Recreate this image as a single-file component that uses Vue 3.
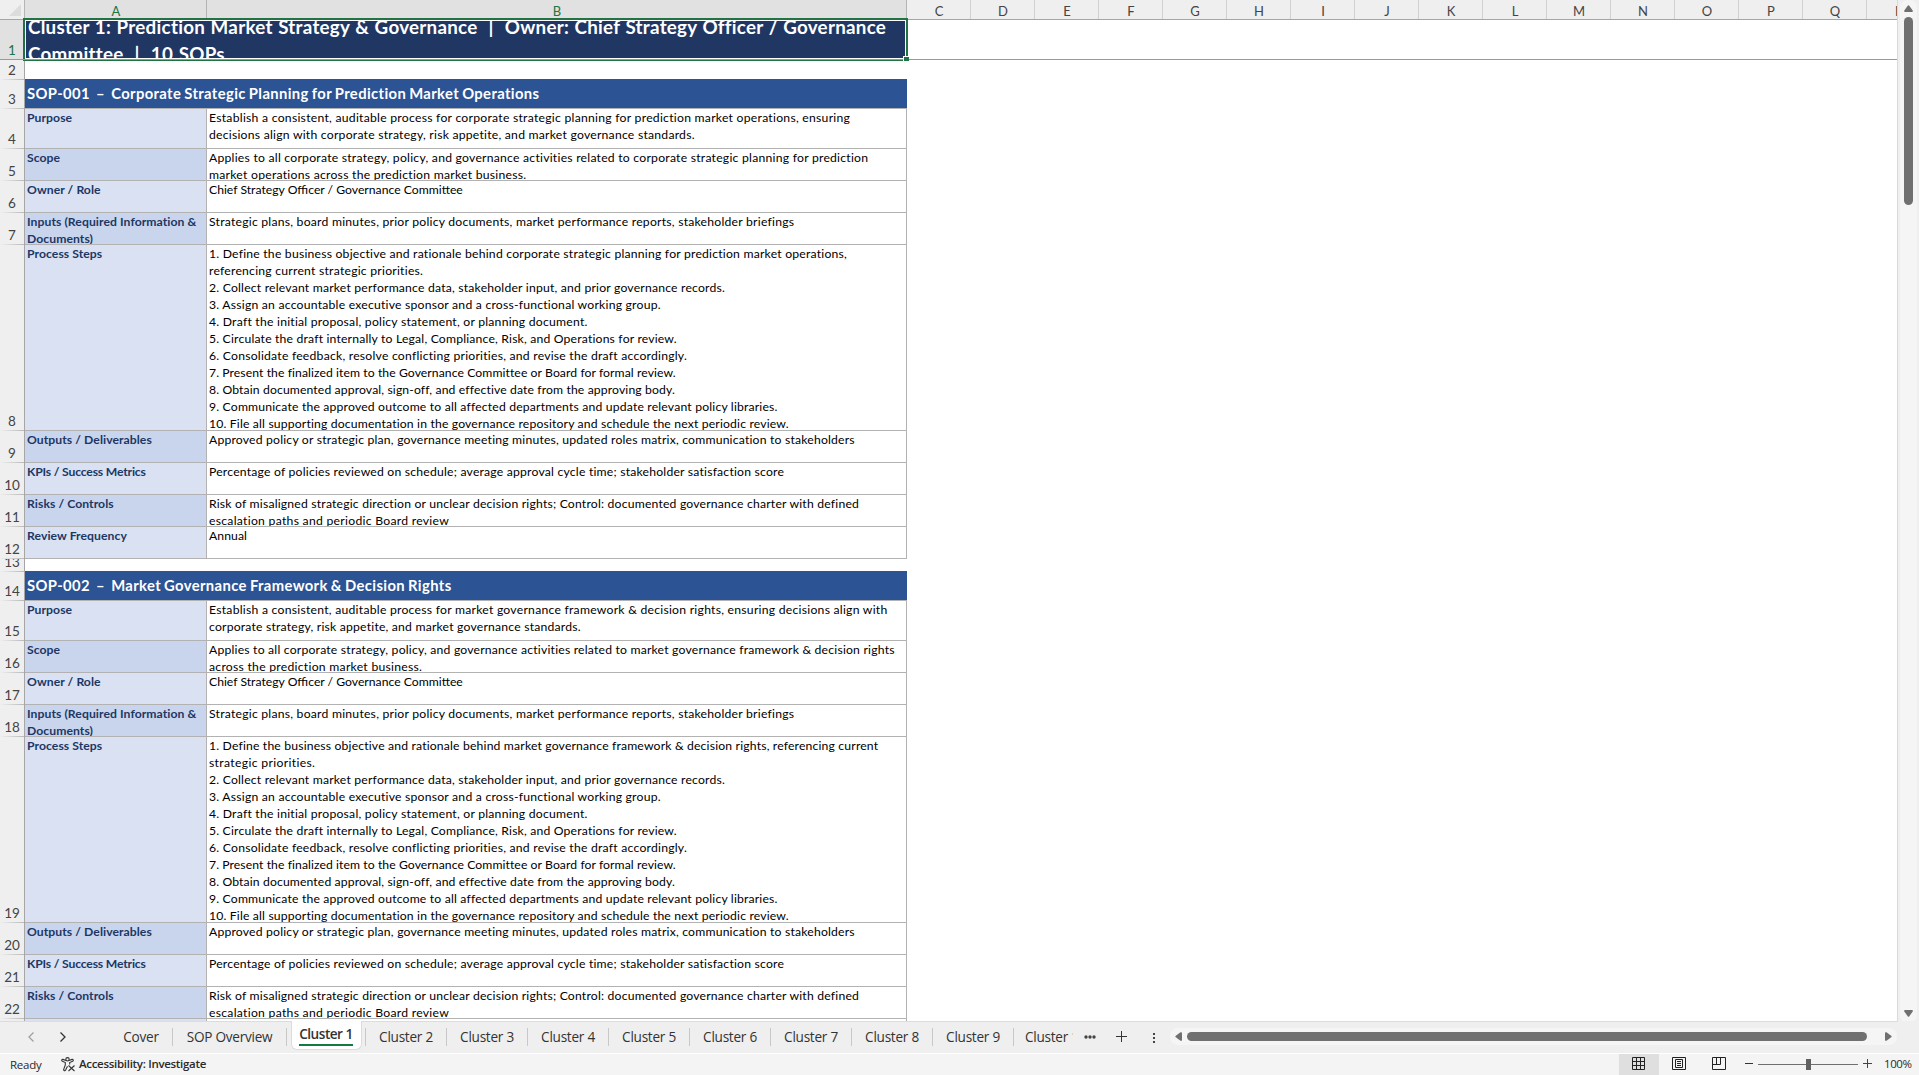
<template>
  <div class="excel">
    <div class="workspace">
      <div class="sheet">
        <!-- Column headers -->
        <div class="col-headers">
          <div class="corner"><svg width="12" height="12" viewBox="0 0 12 12"><path d="M12 0V12H0z" fill="#dcdcdc" /></svg></div>
          <div class="col-head col-a selected">A</div>
          <div class="col-head col-b selected">B</div>
          <div v-for="letter in otherColumns" :key="letter" class="col-head">{{ letter }}</div>
        </div>

        <!-- Rows -->
        <div class="rows">
          <div v-for="row in rows" :key="row.num" :class="['row', row.type]" :style="{ height: row.height + 'px' }">
            <div class="row-head"><span>{{ row.num }}</span></div>
            <div v-if="row.type === 'title'" class="title-cell">{{ row.text }}</div>
            <div v-else-if="row.type === 'section'" class="section-cell">{{ row.text }}</div>
            <template v-else-if="row.type === 'field'">
              <div :class="['label-cell', { alt: row.alt, tight: row.label.startsWith('KPIs') }]">{{ row.label }}</div>
              <div class="value-cell">
                <div v-for="([text, extra], idx) in row.lines" :key="idx" :style="{ letterSpacing: tracking(text, extra) }">{{ text }}</div>
              </div>
            </template>
          </div>
        </div>

        <div class="freeze-line"></div>
        <div class="selection"></div>
        <div class="selection-base"></div>
        <div class="fill-handle"></div>
      </div>

      <!-- Vertical scrollbar -->
      <div class="v-scroll">
        <svg class="v-arrow" width="9" height="7" viewBox="0 0 9 7"><path d="M3.7.8Q4.5-.2 5.3.8L8.7 5.5Q9.2 7 8 7H1Q-.2 7 .3 5.5z" fill="#707070" /></svg>
        <div class="v-thumb"></div>
        <svg class="v-arrow down" width="9" height="7" viewBox="0 0 9 7"><path d="M3.7 6.2Q4.5 7.2 5.3 6.2L8.7 1.5Q9.2 0 8 0H1Q-.2 0 .3 1.5z" fill="#707070" /></svg>
      </div>
    </div>

    <!-- Sheet tabs -->
    <div class="tab-bar">
      <div class="tab-nav">
        <svg width="8" height="12" viewBox="0 0 8 12"><path d="M6.5 1.5L2 6l4.5 4.5" fill="none" stroke="#a0a0a0" stroke-width="1.3" /></svg>
        <svg width="8" height="12" viewBox="0 0 8 12"><path d="M1.5 1.5L6 6l-4.5 4.5" fill="none" stroke="#333" stroke-width="1.3" /></svg>
      </div>
      <div v-for="tab in tabs" :key="tab.name" :class="['tab', tab.cls, { active: tab.name === activeTab }]" @click="activeTab = tab.name">
        <span>{{ tab.name }}</span>
      </div>
      <div class="tab cut"><span>Cluster 10</span></div>
      <svg class="more" width="12" height="4" viewBox="0 0 12 4"><g fill="#444"><circle cx="2" cy="2" r="1.7" /><circle cx="6" cy="2" r="1.7" /><circle cx="10" cy="2" r="1.7" /></g></svg>
      <svg class="add" width="11" height="11" viewBox="0 0 11 11"><path d="M5.5 0V11M0 5.5H11" stroke="#333" stroke-width="1" /></svg>
      <svg class="grip" width="2" height="10" viewBox="0 0 2 10"><path d="M0 0h2v2H0zM0 4h2v2H0zM0 8h2v2H0z" fill="#444" /></svg>
      <div class="h-scroll">
        <svg width="7" height="9" viewBox="0 0 7 9"><path d="M.8 3.7Q-.2 4.5 .8 5.3L5.5 8.7Q7 9.2 7 8V1Q7-.2 5.5.3z" fill="#707070" /></svg>
        <div class="h-thumb"></div>
        <svg width="7" height="9" viewBox="0 0 7 9"><path d="M6.2 3.7Q7.2 4.5 6.2 5.3L1.5 8.7Q0 9.2 0 8V1Q0-.2 1.5.3z" fill="#707070" /></svg>
      </div>
    </div>

    <!-- Status bar -->
    <div class="status-bar">
      <span class="ready">Ready</span>
      <svg class="access-icon" width="15" height="15" viewBox="0 0 15 15" fill="none" stroke="#333" stroke-width="1.1">
        <circle cx="6.5" cy="2.3" r="1.7" />
        <path d="M4.9 3.5L2 2.4C.6 2.2.3 3.8 1.4 4.3L4.3 5.5V8L2.7 12.3C2.5 13.7 4 14.2 4.6 13.1L6.5 9.2M8.1 3.5L11 2.4C12.4 2.2 12.7 3.8 11.6 4.3L8.7 5.5V7.5" />
        <path d="M7.5 8.5L13.5 14M13.5 8.5L7.5 14" />
      </svg>
      <span class="access">Accessibility: Investigate</span>
      <div class="views">
        <div class="view on">
          <svg width="14" height="14" viewBox="0 0 14 14" fill="none" stroke="#222"><path d="M.5.5h12v12H.5zM4.5.5v12M8.5.5v12M.5 4.5h12M.5 8.5h12" /></svg>
        </div>
        <div class="view">
          <svg width="14" height="14" viewBox="0 0 14 14" fill="none" stroke="#222"><path d="M.5.5h13v12H.5zM3.5 2.5h7v8h-7zM5 4.5h4M5 6.5h4M5 8.5h4" /></svg>
        </div>
        <div class="view">
          <svg width="14" height="14" viewBox="0 0 14 14" fill="none" stroke="#222"><path d="M.5.5h13v12H.5zM.5 7.5h8v-7M4.5.5v7" /></svg>
        </div>
      </div>
      <div class="zoom">
        <span class="minus"></span>
        <div class="slider"><div class="knob"></div></div>
        <svg width="9" height="9" viewBox="0 0 9 9"><path d="M4.5 0V9M0 4.5H9" stroke="#444" /></svg>
        <span class="percent">100%</span>
      </div>
    </div>
  </div>
</template>

<script setup>
import { ref } from 'vue'

const otherColumns = 'CDEFGHIJKLMNOPQR'.split('')

const activeTab = ref('Cluster 1')
const tabs = [
  { name: 'Cover', cls: 'cover' },
  { name: 'SOP Overview', cls: 'overview' },
  ...[1, 2, 3, 4, 5, 6, 7, 8, 9].map(n => ({ name: 'Cluster ' + n, cls: n === 1 ? 'first' : '' })),
]

// each line is [text, extra width in px spread over its letters]
const commonSteps = [
  ['2. Collect relevant market performance data, stakeholder input, and prior governance records.', 18.5],
  ['3. Assign an accountable executive sponsor and a cross-functional working group.', 17.5],
  ['4. Draft the initial proposal, policy statement, or planning document.', 16],
  ['5. Circulate the draft internally to Legal, Compliance, Risk, and Operations for review.', 16],
  ['6. Consolidate feedback, resolve conflicting priorities, and revise the draft accordingly.', 20.5],
  ['7. Present the finalized item to the Governance Committee or Board for formal review.', 6.5],
  ['8. Obtain documented approval, sign-off, and effective date from the approving body.', 10.5],
  ['9. Communicate the approved outcome to all affected departments and update relevant policy libraries.', 18],
  ['10. File all supporting documentation in the governance repository and schedule the next periodic review.', 17],
]

const sops = [
  {
    title: 'SOP-001  –  Corporate Strategic Planning for Prediction Market Operations',
    purpose: [
      ['Establish a consistent, auditable process for corporate strategic planning for prediction market operations, ensuring', 30],
      ['decisions align with corporate strategy, risk appetite, and market governance standards.', 20.5],
    ],
    scope: [
      ['Applies to all corporate strategy, policy, and governance activities related to corporate strategic planning for prediction', 29],
      ['market operations across the prediction market business.', 14],
    ],
    firstStep: [
      ['1. Define the business objective and rationale behind corporate strategic planning for prediction market operations,', 24.5],
      ['referencing current strategic priorities.', 9.5],
    ],
  },
  {
    title: 'SOP-002  –  Market Governance Framework & Decision Rights',
    purpose: [
      ['Establish a consistent, auditable process for market governance framework & decision rights, ensuring decisions align with', 30],
      ['corporate strategy, risk appetite, and market governance standards.', 13.5],
    ],
    scope: [
      ['Applies to all corporate strategy, policy, and governance activities related to market governance framework & decision rights', 25],
      ['across the prediction market business.', 10],
    ],
    firstStep: [
      ['1. Define the business objective and rationale behind market governance framework & decision rights, referencing current', 20],
      ['strategic priorities.', 7],
    ],
  },
]

function tracking(text, extra) {
  return (extra / text.length).toFixed(3) + 'px'
}

function sopRows(sop) {
  const fields = [
    ['Purpose', sop.purpose, 40],
    ['Scope', sop.scope, 32],
    ['Owner / Role', [['Chief Strategy Officer / Governance Committee', 0]], 32],
    ['Inputs (Required Information &\nDocuments)', [['Strategic plans, board minutes, prior policy documents, market performance reports, stakeholder briefings', 24]], 32],
    ['Process Steps', [...sop.firstStep, ...commonSteps], 186],
    ['Outputs / Deliverables', [['Approved policy or strategic plan, governance meeting minutes, updated roles matrix, communication to stakeholders', 22]], 32],
    ['KPIs / Success Metrics', [['Percentage of policies reviewed on schedule; average approval cycle time; stakeholder satisfaction score', 21.5]], 32],
    ['Risks / Controls', [
      ['Risk of misaligned strategic direction or unclear decision rights; Control: documented governance charter with defined', 23],
      ['escalation paths and periodic Board review', 11.5],
    ], 32],
    ['Review Frequency', [['Annual', 0.5]], 32],
  ]
  return [
    { type: 'section', text: sop.title, height: 29 },
    ...fields.map(([label, lines, height], i) => ({ type: 'field', label, lines, height, alt: i % 2 === 1 })),
  ]
}

const rows = [
  { type: 'title', text: 'Cluster 1: Prediction Market Strategy & Governance  |  Owner: Chief Strategy Officer / Governance\nCommittee  |  10 SOPs', height: 40 },
  { type: 'blank', height: 20 },
  ...sopRows(sops[0]),
  { type: 'blank', height: 13 },
  ...sopRows(sops[1]),
].map((row, i) => ({ ...row, num: i + 1 }))
</script>

<style>
body {
  overflow: hidden;
}
</style>

<style scoped>
.excel {
  width: 1919px;
  height: 1075px;
  display: flex;
  flex-direction: column;
  background: #efefef;
  font-family: 'Open Sans', 'Noto Sans', sans-serif;
  overflow: hidden;
}
.excel * {
  box-sizing: border-box;
}
.excel svg {
  display: block;
  flex: none;
}
.workspace {
  height: 1021px;
  display: flex;
}
.sheet {
  position: relative;
  width: 1898px;
  height: 1021px;
  background: #fff;
  border-right: 1px solid #dadada;
  overflow: hidden;
  font-family: Lato, sans-serif;
}
.col-headers {
  display: flex;
  height: 20px;
  width: 2000px;
  background: #efefef;
  border-bottom: 1px solid #a6a6a6;
}
.corner {
  width: 25px;
  padding: 4px 0 0 9px;
  border-right: 1px solid #b4b4b4;
}
.col-head {
  width: 64px;
  height: 19px;
  padding-left: 1px;
  line-height: 22px;
  font-size: 13px;
  color: #444;
  text-align: center;
  border-right: 1px solid #d0d0d0;
}
.col-head.selected {
  background: #e1e1e1;
  color: #217346;
  border-right-color: #b4b4b4;
}
.col-a {
  width: 182px;
}
.col-b {
  width: 700px;
}
.row {
  display: flex;
}
.row-head {
  width: 25px;
  height: 100%;
  display: flex;
  align-items: flex-end;
  justify-content: center;
  padding-bottom: 1px;
  overflow: hidden;
  background: linear-gradient(90deg, #efefef, #b8b8b8) bottom / 100% 1px no-repeat, #efefef;
  border-right: 1px solid #a6a6a6;
  color: #444;
  font-size: 13.5px;
  line-height: 17px;
}
.title .row-head {
  background: #e1e1e1;
  color: #217346;
}
.title-cell {
  width: 882px;
  height: 40px;
  display: flex;
  align-items: center;
  padding-left: 3px;
  background: #203764;
  color: #fff;
  font-size: 18.8px;
  font-weight: 700;
  line-height: 27px;
  letter-spacing: 0.26px;
  word-spacing: 0.7px;
  white-space: pre;
  overflow: hidden;
}
.section-cell {
  width: 882px;
  margin-top: -1px;
  padding: 1px 0 0 2px;
  background: #2c5393;
  border-bottom: 1px solid #b2b2b2;
  color: #fff;
  font-size: 14.8px;
  font-weight: 700;
  line-height: 27px;
  letter-spacing: 0.37px;
  word-spacing: -0.9px;
  white-space: pre;
}
.label-cell,
.value-cell {
  height: 100%;
  padding-left: 2px;
  border-right: 1px solid #b2b2b2;
  border-bottom: 1px solid #b2b2b2;
  font-size: 12.2px;
  line-height: 17px;
  white-space: pre;
  overflow: hidden;
}
.label-cell {
  width: 182px;
  background: #d9e1f2;
  color: #203764;
  font-weight: 700;
  letter-spacing: 0.06px;
}
.label-cell.alt {
  background: #c9d5ed;
}
.label-cell.tight {
  letter-spacing: -0.18px;
}
.value-cell {
  width: 700px;
  color: #000;
}
.freeze-line {
  position: absolute;
  left: 0;
  top: 59px;
  width: 100%;
  height: 1px;
  background: #999;
}
.selection {
  position: absolute;
  left: 23px;
  top: 18px;
  width: 885px;
  height: 41px;
  border: 2px solid #217346;
  border-bottom: none;
  box-shadow: inset 0 0 0 1px #fff;
}
.selection-base {
  position: absolute;
  left: 23px;
  top: 60px;
  width: 881px;
  height: 1px;
  background: #217346;
}
.fill-handle {
  position: absolute;
  left: 903px;
  top: 56px;
  width: 6px;
  height: 6px;
  background: #217346;
  border: 1px solid #fff;
  border-right: none;
}
.v-scroll {
  width: 17px;
  height: 1023px;
  margin-left: 2px;
  padding: 5px 0 6px;
  display: flex;
  flex-direction: column;
  align-items: center;
  background: #f5f5f5;
  border-radius: 8px;
}
.v-thumb {
  width: 9px;
  height: 188px;
  margin-top: 5px;
  border-radius: 5px;
  background: #707070;
}
.v-arrow.down {
  margin-top: auto;
}
.tab-bar {
  display: flex;
  height: 33px;
  flex: none;
  background: linear-gradient(#dcdcdc, #dcdcdc) 0 0 / 1898px 1px no-repeat, #efefef;
  border-bottom: 1px solid #fff;
  font-size: 13.6px;
  color: #333;
}
.tab-nav {
  display: flex;
  gap: 24px;
  width: 110px;
  padding: 10px 0 0 27px;
}
.tab {
  position: relative;
  width: 81px;
  height: 32px;
  padding-right: 1px;
  line-height: 32px;
  text-align: center;
  white-space: nowrap;
}
.tab span {
  display: inline-block;
  letter-spacing: -0.26px;
}
.tab::after {
  content: '';
  position: absolute;
  right: 0;
  top: 7px;
  width: 1px;
  height: 18px;
  background: #c8c8c8;
}
.tab.cover {
  width: 63px;
}
.tab.overview {
  width: 114px;
}
.tab.first {
  width: 79px;
}
.tab.active {
  height: 29px;
  width: 71px;
  margin: 0 4px;
  background: #fff;
  border: 1px solid #dcdcdc;
  border-top: none;
  border-radius: 0 0 6px 6px;
  font-weight: 600;
}
.tab.active::after {
  right: -5px;
}
.tab.active span {
  height: 25px;
  line-height: 26px;
  vertical-align: top;
  letter-spacing: -0.5px;
  border-bottom: 2px solid #107c41;
}
.tab.cut {
  width: 59px;
  padding-left: 11px;
  text-align: left;
  overflow: hidden;
}
.tab.cut::after {
  display: none;
}
.more {
  margin: 14px 0 0 11px;
}
.add {
  margin: 10px 0 0 20px;
}
.grip {
  margin: 12px 0 0 26px;
}
.h-scroll {
  display: flex;
  align-items: center;
  width: 727px;
  height: 17px;
  margin: 7px 0 0 15px;
  padding: 0 5px;
  background: #f5f5f5;
  border-radius: 8px;
}
.h-thumb {
  width: 680px;
  height: 9px;
  margin: 0 auto 0 5px;
  border-radius: 5px;
  background: #707070;
}
.status-bar {
  display: flex;
  height: 21px;
  background: #f4f4f4;
  color: #2a2a2a;
  font-size: 11.5px;
  line-height: 21px;
}
.ready {
  width: 50px;
  padding-left: 10px;
  letter-spacing: -0.25px;
}
.access-icon {
  margin: 3px 0 0 11px;
}
.access {
  margin-left: 3px;
  font-weight: 600;
  letter-spacing: -0.3px;
  line-height: 20px;
  white-space: nowrap;
}
.views {
  display: flex;
  margin-left: auto;
}
.view {
  width: 40px;
  height: 21px;
  padding: 3px 0 0 13px;
}
.view.on {
  background: #dfdfdf;
}
.zoom {
  display: flex;
  width: 180px;
  padding-left: 6px;
}
.minus {
  width: 8px;
  height: 1px;
  margin: 9px 5px 0 0;
  background: #333;
}
.slider {
  width: 100px;
  height: 1px;
  margin-top: 10px;
  background: #707070;
}
.knob {
  width: 5px;
  height: 11px;
  margin: -5px 0 0 48px;
  background: #606060;
}
.zoom svg {
  margin: 5px 0 0 5px;
}
.percent {
  margin-left: 12px;
  line-height: 20px;
  letter-spacing: -0.45px;
}
</style>
